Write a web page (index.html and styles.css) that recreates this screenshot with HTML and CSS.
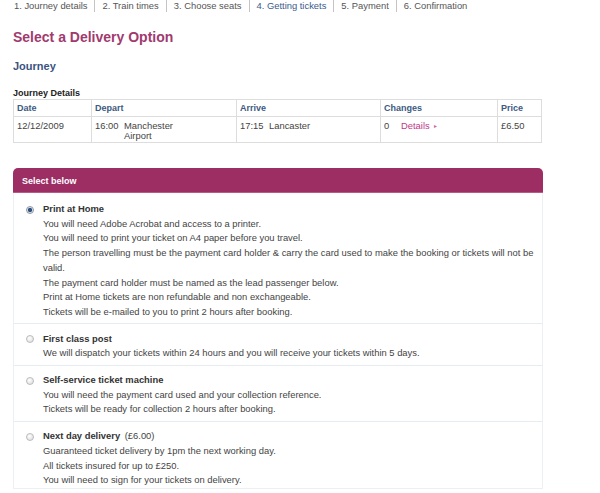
FILE: index.html
```html
<!DOCTYPE html>
<html lang="en">
<head>
<meta charset="utf-8">
<title>Select a Delivery Option</title>
<link rel="stylesheet" href="styles.css">
</head>
<body>
<ul class="steps">
  <li class="step">1. Journey details</li>
  <li class="step">2. Train times</li>
  <li class="step">3. Choose seats</li>
  <li class="step step-active">4. Getting tickets</li>
  <li class="step">5. Payment</li>
  <li class="step">6. Confirmation</li>
</ul>

<h1 class="page-title">Select a Delivery Option</h1>
<h2 class="section-title">Journey</h2>
<h3 class="table-title">Journey Details</h3>

<table class="journey">
  <colgroup>
    <col class="c-date"><col class="c-depart"><col class="c-arrive"><col class="c-changes"><col class="c-price">
  </colgroup>
  <thead>
    <tr><th>Date</th><th>Depart</th><th>Arrive</th><th>Changes</th><th>Price</th></tr>
  </thead>
  <tbody>
    <tr>
      <td>12/12/2009</td>
      <td><div class="stop"><span class="time">16:00</span><span class="place">Manchester<br>Airport</span></div></td>
      <td><div class="stop"><span class="time">17:15</span><span class="place">Lancaster</span></div></td>
      <td><span class="changes">0</span><a class="details" href="#">Details <span class="arrow">&#9656;</span></a></td>
      <td>&pound;6.50</td>
    </tr>
  </tbody>
</table>

<div class="panel">
  <div class="panel-head">Select below</div>
  <div class="panel-body">
    <div class="option">
      <span class="radio radio-on"></span>
      <div class="option-text">
        <div class="option-name">Print at Home</div>
        <div>You will need Adobe Acrobat and access to a printer.</div>
        <div>You will need to print your ticket on A4 paper before you travel.</div>
        <div>The person travelling must be the payment card holder &amp; carry the card used to make the booking or tickets will not be valid.</div>
        <div>The payment card holder must be named as the lead passenger below.</div>
        <div>Print at Home tickets are non refundable and non exchangeable.</div>
        <div>Tickets will be e-mailed to you to print 2 hours after booking.</div>
      </div>
    </div>
    <div class="option">
      <span class="radio"></span>
      <div class="option-text">
        <div class="option-name">First class post</div>
        <div>We will dispatch your tickets within 24 hours and you will receive your tickets within 5 days.</div>
      </div>
    </div>
    <div class="option">
      <span class="radio"></span>
      <div class="option-text">
        <div class="option-name">Self-service ticket machine</div>
        <div>You will need the payment card used and your collection reference.</div>
        <div>Tickets will be ready for collection 2 hours after booking.</div>
      </div>
    </div>
    <div class="option option-last">
      <span class="radio"></span>
      <div class="option-text">
        <div class="option-name">Next day delivery <span class="option-price">(&pound;6.00)</span></div>
        <div>Guaranteed ticket delivery by 1pm the next working day.</div>
        <div>All tickets insured for up to &pound;250.</div>
        <div>You will need to sign for your tickets on delivery.</div>
      </div>
    </div>
  </div>
</div>
</body>
</html>
```

FILE: styles.css
```css
html, body {
  margin: 0;
  padding: 0;
  background: #ffffff;
}

body {
  font-family: "Liberation Sans", Arial, sans-serif;
  font-size: 9.4px;
  color: #444444;
}

.steps {
  display: flex;
  list-style: none;
  margin: 0;
  padding: 0 0 0 14px;
}

.step {
  padding: 0 7px;
  line-height: 12px;
  border-left: 1px solid #c4c4c4;
  color: #555555;
}

.step:first-child {
  padding-left: 0;
  border-left: none;
}

.step-active {
  color: #3b5a8c;
}

.page-title {
  margin: 17px 0 0 13px;
  font-size: 14px;
  line-height: 16px;
  color: #a03a6f;
}

.section-title {
  margin: 15px 0 0 13px;
  font-size: 11px;
  line-height: 13px;
  color: #3a5380;
}

.table-title {
  margin: 15px 0 0 13px;
  font-size: 9px;
  line-height: 11px;
  color: #222222;
}

.journey {
  margin: 0 0 0 13px;
  width: 529px;
  border-collapse: collapse;
  table-layout: fixed;
}

.c-date { width: 78px; }
.c-depart { width: 145px; }
.c-arrive { width: 144px; }
.c-changes { width: 117px; }
.c-price { width: 44px; }

.journey th,
.journey td {
  border: 1px solid #dddddd;
  text-align: left;
  vertical-align: top;
  padding: 3px 3px;
  line-height: 10px;
}

.journey th {
  font-size: 9px;
  font-weight: bold;
  color: #3d5a82;
}

.journey td {
  padding: 4px 3px 2px;
  height: 18px;
  line-height: 9.5px;
}

.stop {
  display: flex;
}

.time {
  width: 29px;
  flex: none;
}

.changes {
  display: inline-block;
  width: 17px;
}

.details {
  color: #c2378a;
  text-decoration: none;
}

.arrow {
  font-size: 6px;
  margin-left: 2px;
  vertical-align: 1px;
  color: #c96aa0;
}

.panel {
  margin: 25px 0 0 13px;
  width: 530px;
}

.panel-head {
  height: 21px;
  padding: 3px 0 0 9px;
  line-height: 21px;
  background: #9c2e64;
  border-radius: 5px 5px 0 0;
  border-bottom: 1px solid #b85a88;
  color: #ffffff;
  font-size: 9px;
  font-weight: bold;
}

.panel-body {
  border: 1px solid #edf0f2;
  border-top: none;
}

.option {
  display: flex;
  align-items: flex-start;
  padding: 7.5px 4px 3.5px 0;
  border-top: 1px solid #e6edf2;
  line-height: 14.7px;
}

.option:first-child {
  border-top: none;
  padding-top: 9px;
}

.option-last {
  padding-bottom: 0;
}

.option-text {
  flex: 1;
}

.option-name {
  font-weight: bold;
  color: #333333;
}

.option-price {
  font-weight: normal;
  color: #444444;
  margin-left: 2px;
}

.radio {
  flex: none;
  box-sizing: border-box;
  width: 8px;
  height: 8px;
  margin: 3.5px 9px 0 12px;
  border-radius: 50%;
  border: 1px solid #b9bcbf;
  background: radial-gradient(circle at 40% 35%, #ffffff 0%, #e4e4e4 70%, #d2d2d2 100%);
}

.radio-on {
  border-color: #8c9aa8;
  background: radial-gradient(circle at 50% 50%, #2f4f7c 0%, #2f4f7c 45%, #d7dde3 55%, #eef1f4 100%);
}
```
